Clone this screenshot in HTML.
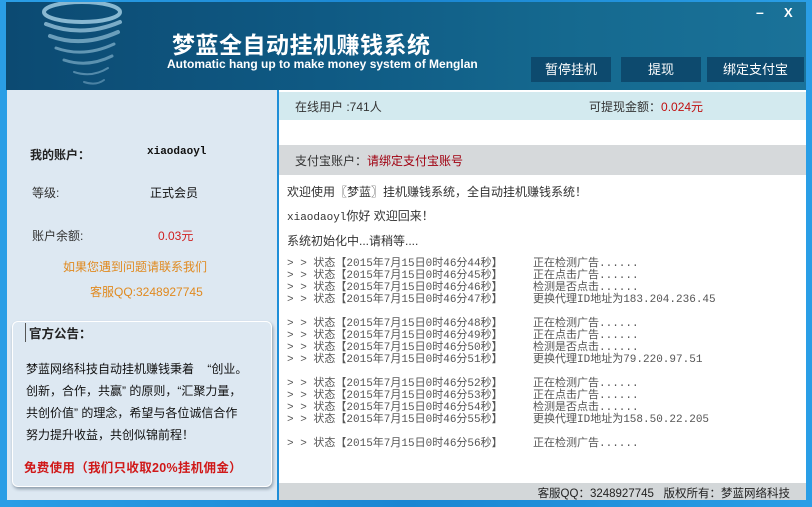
<!DOCTYPE html>
<html><head><meta charset="utf-8"><style>
*{margin:0;padding:0;box-sizing:border-box}
body{width:812px;height:507px;overflow:hidden;background:linear-gradient(90deg,#2a9ee6,#1a86d2 50%,#2a9ee6);font-family:"Liberation Sans","Noto Sans CJK SC",sans-serif;font-size:12px;color:#333;position:relative}
.abs{position:absolute}
#hdr{left:6px;top:2px;width:800px;height:88px;background:linear-gradient(90deg,#0c4a72 0%,#0f5a84 40%,#15698f 70%,#1a7299 100%)}
.btn{position:absolute;top:55px;height:25px;background:#0d4a6e;color:#fff;font-size:13px;text-align:center;line-height:25px}
#left{left:7px;top:90px;width:270px;height:410px;background:#dde8f2}
#right{left:279px;top:90px;width:527px;height:410px;background:#fff}
.log{font-family:"Liberation Mono","Noto Sans CJK SC",monospace;font-size:11px;line-height:12px;color:#555;white-space:pre}
.ann div{white-space:nowrap;height:22px}
</style></head><body>
<div id="hdr" class="abs">
 <svg class="abs" style="left:34px;top:0" width="84" height="86" viewBox="0 0 84 86">
  <g fill="none" stroke="#a9d3e8" stroke-linecap="round">
   <ellipse cx="42" cy="10" rx="38" ry="10" stroke-width="4" opacity=".8"/>
   <path d="M6 22 Q42 36 80 20" stroke-width="4" opacity=".7"/>
   <path d="M10 34 Q42 46 78 30" stroke-width="4" opacity=".6"/>
   <path d="M16 46 Q44 56 74 42" stroke-width="3" opacity=".55"/>
   <path d="M24 58 Q48 66 72 54" stroke-width="3" opacity=".5"/>
   <path d="M34 70 Q52 76 68 66" stroke-width="2" opacity=".45"/>
   <path d="M44 80 Q56 84 64 78" stroke-width="2" opacity=".4"/>
  </g>
 </svg>
 <div class="abs" style="left:166px;top:24px;color:#fff;font-size:23px;font-weight:bold;letter-spacing:0.5px">梦蓝全自动挂机赚钱系统</div>
 <div class="abs" style="left:161px;top:55px;color:#fff;font-size:12px;font-weight:bold">Automatic hang up to make money system of Menglan</div>
 <div class="abs" style="left:750px;top:2px;color:#fff;font-size:14px;font-weight:bold">–</div>
 <div class="abs" style="left:778px;top:3px;color:#fff;font-size:13px;font-weight:bold">X</div>
 <div class="btn" style="left:525px;width:80px">暂停挂机</div>
 <div class="btn" style="left:615px;width:80px">提现</div>
 <div class="btn" style="left:701px;width:97px">绑定支付宝</div>
</div>
<div id="left" class="abs">
 <div class="abs" style="left:23px;top:56px;font-weight:bold;color:#222">我的账户：</div>
 <div class="abs" style="left:140px;top:56px;font-weight:bold;color:#111;font-family:'Liberation Mono',monospace;font-size:11px">xiaodaoyl</div>
 <div class="abs" style="left:25px;top:94px">等级:</div>
 <div class="abs" style="left:143px;top:94px;color:#111">正式会员</div>
 <div class="abs" style="left:25px;top:137px">账户余额:</div>
 <div class="abs" style="left:151px;top:137px;color:#d02020">0.03元</div>
 <div class="abs" style="left:56px;top:168px;color:#e08a20">如果您遇到问题请联系我们</div>
 <div class="abs" style="left:83px;top:193px;color:#e08a20">客服QQ:3248927745</div>
 <div class="abs" style="left:5px;top:231px;width:260px;height:166px;border:1px solid #fff;border-radius:6px;background:#dde8f2;box-shadow:1px 2px 3px #8a9aa8"></div>
 <div class="abs" style="left:18px;top:233px;padding-left:3px;border-left:1px solid #555;font-weight:bold;color:#222;font-size:12.5px">官方公告：</div>
 <div class="abs ann" style="left:19px;top:270px;color:#111;font-size:12px">
  <div>梦蓝网络科技自动挂机赚钱秉着&nbsp;&nbsp;&nbsp;&nbsp;“创业。</div>
  <div>创新，合作，共赢” 的原则，“汇聚力量，</div>
  <div>共创价值” 的理念，希望与各位诚信合作</div>
  <div>努力提升收益，共创似锦前程！</div>
 </div>
 <div class="abs" style="left:17px;top:367px;color:#d01818;font-weight:bold;font-size:12.5px;letter-spacing:0.3px">免费使用（我们只收取20%挂机佣金）</div>
</div>
<div id="right" class="abs">
 <div class="abs" style="left:0;top:2px;width:527px;height:28px;background:#d3eaef"></div>
 <div class="abs" style="left:16px;top:8px">在线用户 :741人</div>
 <div class="abs" style="left:310px;top:8px">可提现金额：<span style="color:#c01010">0.024元</span></div>
 <div class="abs" style="left:0;top:55px;width:527px;height:30px;background:#d6d9db"></div>
 <div class="abs" style="left:16px;top:62px">支付宝账户：<span style="color:#a00010">请绑定支付宝账号</span></div>
 <div class="abs" style="left:8px;top:93px;color:#333">欢迎使用〖梦蓝〗挂机赚钱系统，全自动挂机赚钱系统！</div>
 <div class="abs" style="left:8px;top:117px;color:#333"><span style="font-family:'Liberation Mono',monospace;font-size:11px">xiaodaoyl</span>你好 欢迎回来！</div>
 <div class="abs" style="left:8px;top:142px;color:#333">系统初始化中...请稍等....</div>
 <div class="abs log" style="left:8px;top:168px">> > 状态【2015年7月15日0时46分44秒】
> > 状态【2015年7月15日0时46分45秒】
> > 状态【2015年7月15日0时46分46秒】
> > 状态【2015年7月15日0时46分47秒】

> > 状态【2015年7月15日0时46分48秒】
> > 状态【2015年7月15日0时46分49秒】
> > 状态【2015年7月15日0时46分50秒】
> > 状态【2015年7月15日0时46分51秒】

> > 状态【2015年7月15日0时46分52秒】
> > 状态【2015年7月15日0时46分53秒】
> > 状态【2015年7月15日0时46分54秒】
> > 状态【2015年7月15日0时46分55秒】

> > 状态【2015年7月15日0时46分56秒】</div>
 <div class="abs log" style="left:254px;top:168px">正在检测广告......
正在点击广告......
检测是否点击......
更换代理ID地址为183.204.236.45

正在检测广告......
正在点击广告......
检测是否点击......
更换代理ID地址为79.220.97.51

正在检测广告......
正在点击广告......
检测是否点击......
更换代理ID地址为158.50.22.205

正在检测广告......</div>
 <div class="abs" style="left:0;top:393px;width:527px;height:17px;background:#d3d7d9"></div>
 <div class="abs" style="right:16px;top:395px;color:#222;font-size:11.5px;white-space:nowrap">客服QQ：3248927745&nbsp;&nbsp;&nbsp;版权所有：梦蓝网络科技</div>
</div>
</body></html>
